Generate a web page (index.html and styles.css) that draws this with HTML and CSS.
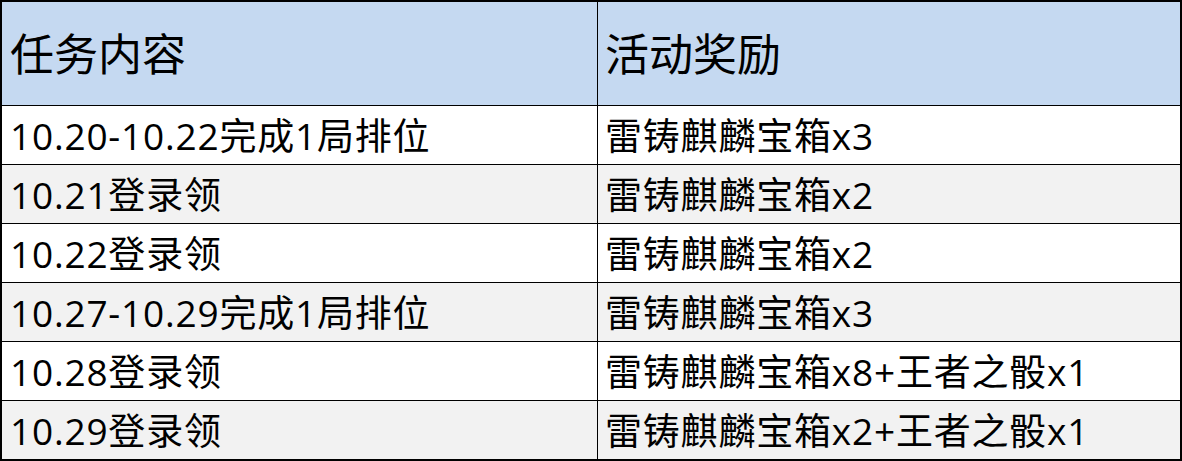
FILE: index.html
```html
<!DOCTYPE html>
<html lang="zh">
<head>
<meta charset="utf-8">
<link rel="stylesheet" href="styles.css">
</head>
<body>
<div class="table">
  <div class="row head">
    <div class="cell c1">任务内容</div>
    <div class="cell">活动奖励</div>
  </div>
  <div class="row">
    <div class="cell c1">10.20-10.22完成1局排位</div>
    <div class="cell">雷铸麒麟宝箱x3</div>
  </div>
  <div class="row alt">
    <div class="cell c1">10.21登录领</div>
    <div class="cell">雷铸麒麟宝箱x2</div>
  </div>
  <div class="row">
    <div class="cell c1">10.22登录领</div>
    <div class="cell">雷铸麒麟宝箱x2</div>
  </div>
  <div class="row alt">
    <div class="cell c1">10.27-10.29完成1局排位</div>
    <div class="cell">雷铸麒麟宝箱x3</div>
  </div>
  <div class="row">
    <div class="cell c1">10.28登录领</div>
    <div class="cell">雷铸麒麟宝箱x8+王者之骰x1</div>
  </div>
  <div class="row alt">
    <div class="cell c1">10.29登录领</div>
    <div class="cell">雷铸麒麟宝箱x2+王者之骰x1</div>
  </div>
</div>
</body>
</html>
```

FILE: styles.css
```css
html, body {
  margin: 0;
  padding: 0;
  background: #fff;
}
.table {
  width: 1182px;
  height: 461px;
  box-sizing: border-box;
  border: 2px solid #000;
  font-family: "Open Sans", "Noto Sans CJK SC", sans-serif;
  color: #000;
}
.row {
  display: grid;
  grid-template-columns: 596px 1fr;
  height: 59px;
  box-sizing: border-box;
  border-top: 1px solid #000;
  background: #fff;
  font-size: 37px;
  letter-spacing: 0.8px;
}
.row.alt {
  background: #f2f2f2;
}
.row.head {
  height: 103px;
  border-top: none;
  background: #c5d9f1;
  font-size: 44px;
  letter-spacing: 0;
}
.cell {
  display: flex;
  align-items: center;
  padding-left: 8px;
  white-space: nowrap;
  line-height: 1;
}
.cell + .cell {
  padding-left: 7px;
}
.c1 {
  border-right: 1px solid #000;
}
```
